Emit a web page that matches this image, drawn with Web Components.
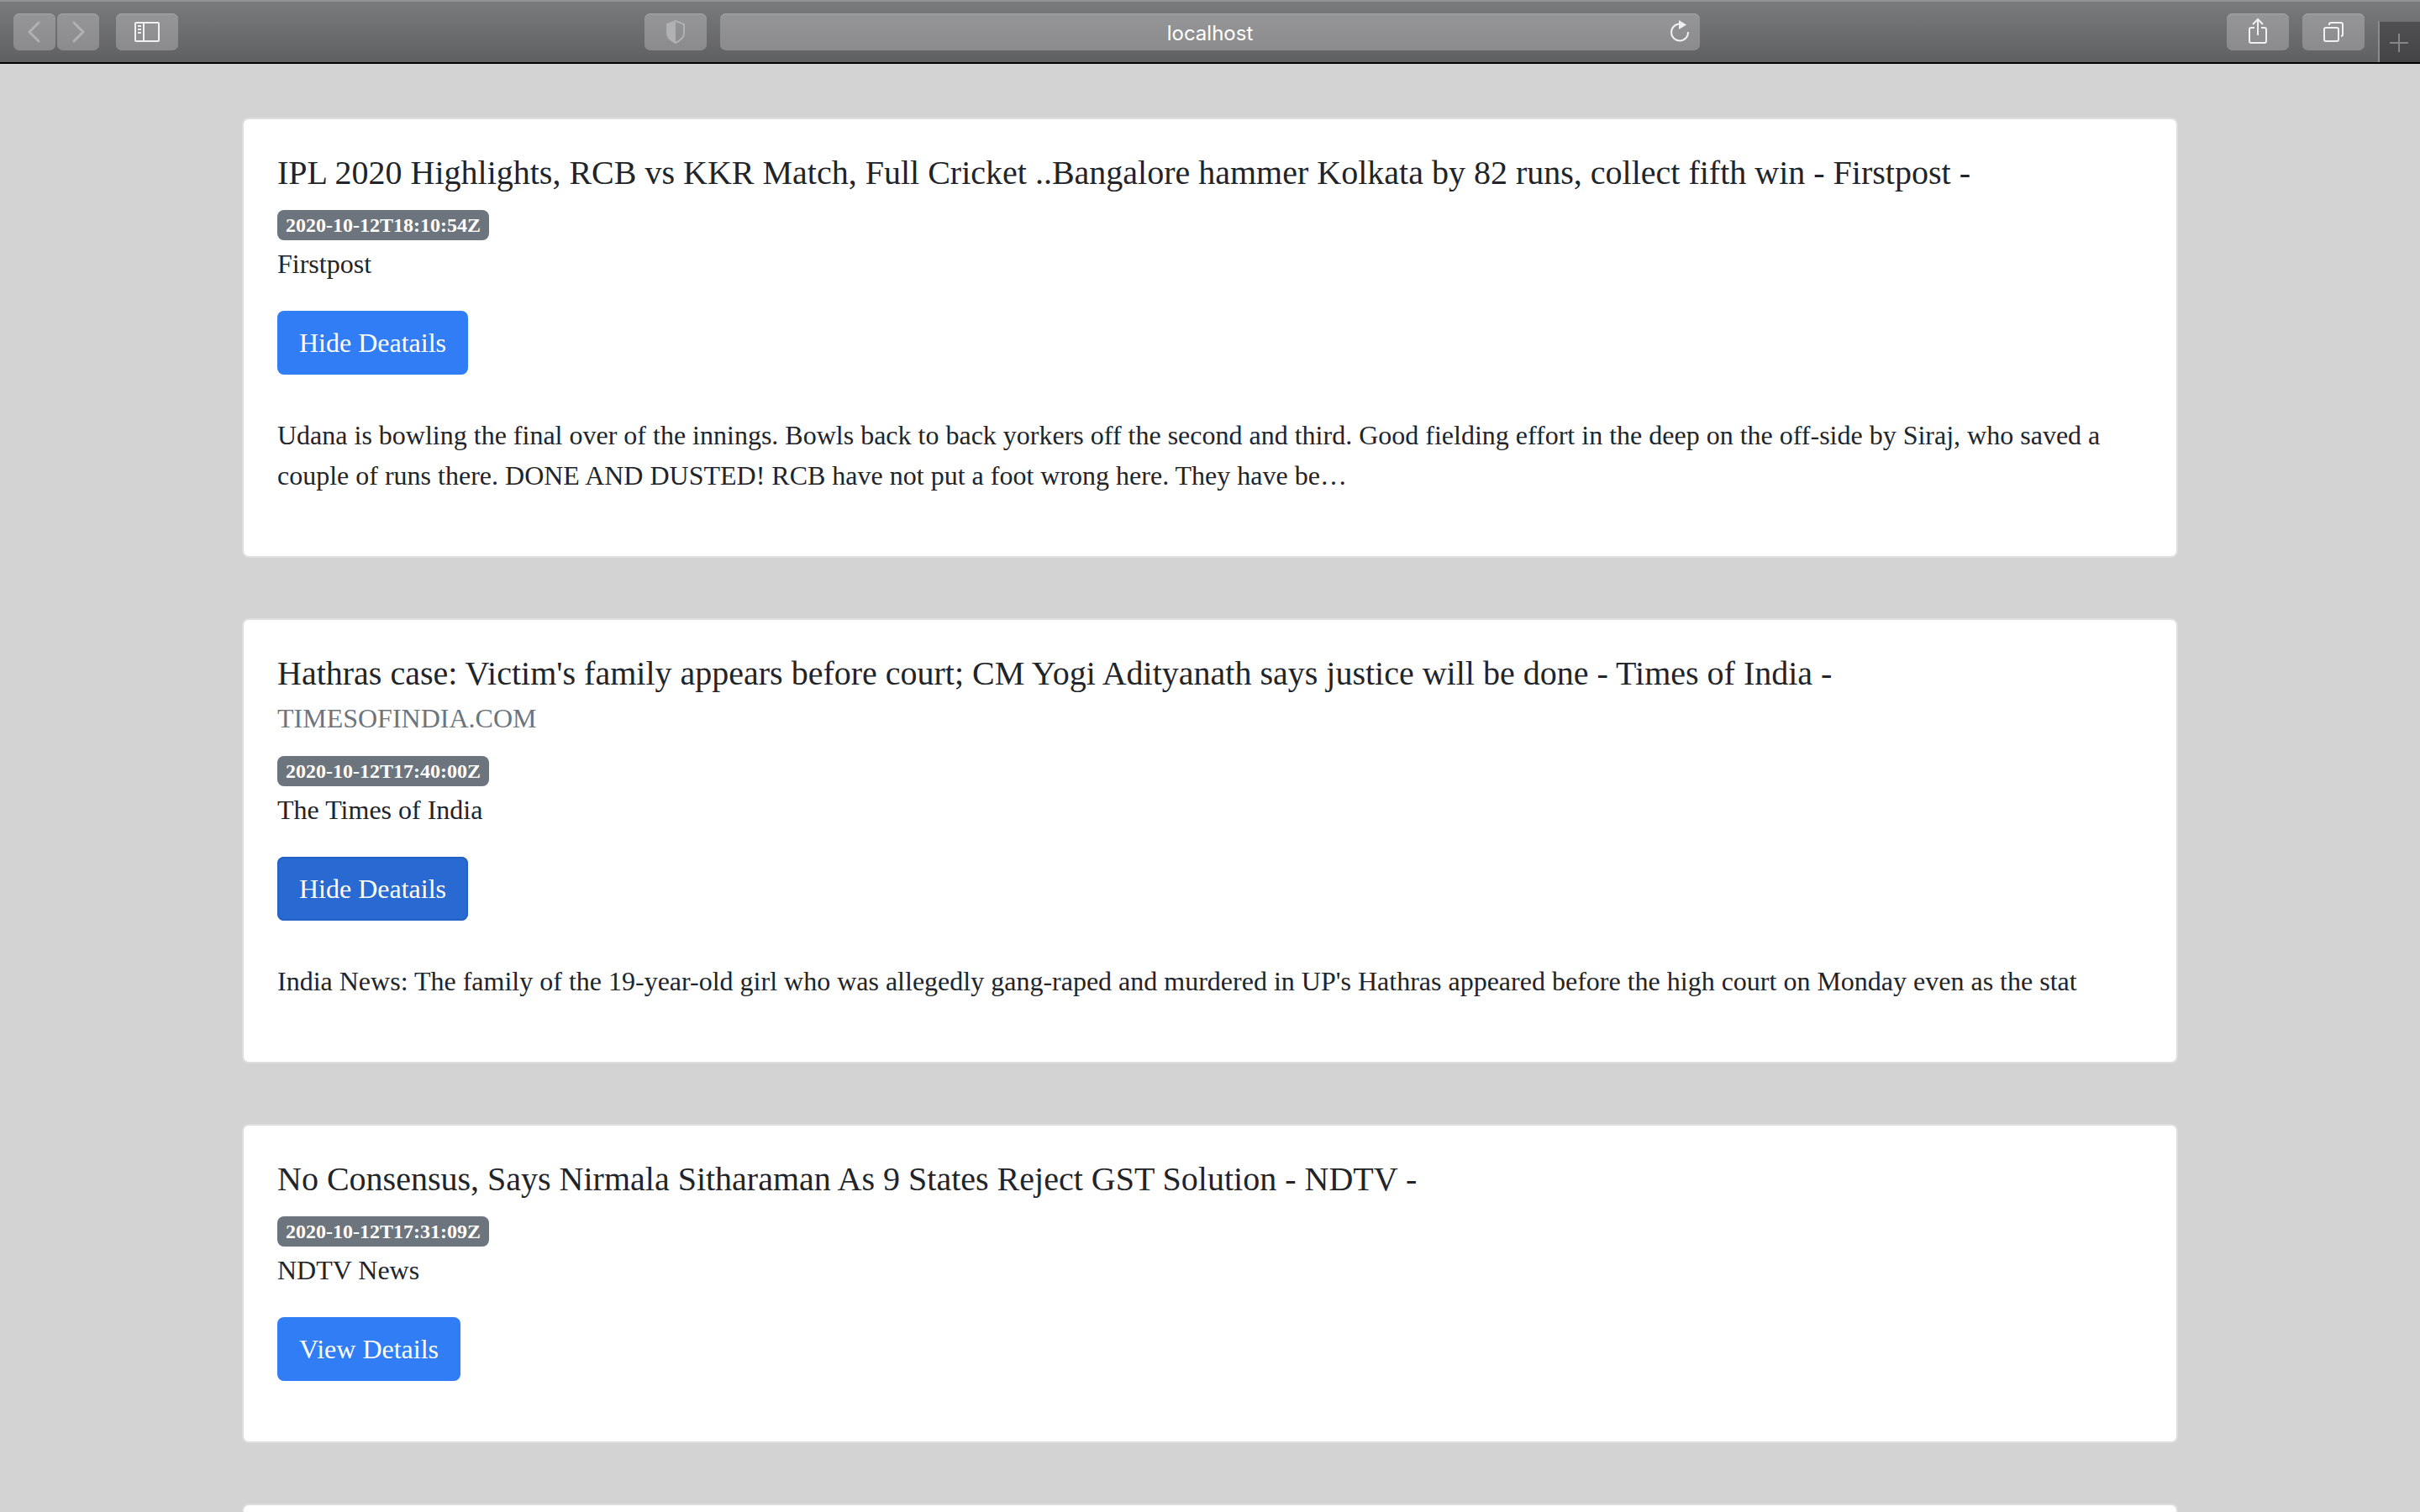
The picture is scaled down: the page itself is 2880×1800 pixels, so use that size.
<!DOCTYPE html>
<html lang="en">
<head>
<meta charset="utf-8">
<title>localhost</title>
<style>
  body { margin: 0; background: #d3d3d3; color: #212529; font: 32px/48px "Liberation Serif", "Times New Roman", serif; height: 100vh; overflow: hidden; }
</style>
</head>
<body>
<news-window>
  <news-card heading="IPL 2020 Highlights, RCB vs KKR Match, Full Cricket ..Bangalore hammer Kolkata by 82 runs, collect fifth win - Firstpost -" time="2020-10-12T18:10:54Z" source="Firstpost" action="Hide Deatails">Udana is bowling the final over of the innings. Bowls back to back yorkers off the second and third. Good fielding effort in the deep on the off-side by Siraj, who saved a couple of runs there. DONE AND DUSTED! RCB have not put a foot wrong here. They have be…</news-card>
  <news-card heading="Hathras case: Victim's family appears before court; CM Yogi Adityanath says justice will be done - Times of India -" author="TIMESOFINDIA.COM" time="2020-10-12T17:40:00Z" source="The Times of India" action="Hide Deatails" pressed>India News: The family of the 19-year-old girl who was allegedly gang-raped and murdered in UP's Hathras appeared before the high court on Monday even as the stat</news-card>
  <news-card heading="No Consensus, Says Nirmala Sitharaman As 9 States Reject GST Solution - NDTV -" time="2020-10-12T17:31:09Z" source="NDTV News" action="View Details"></news-card>
  <news-card></news-card>
</news-window>

<template id="toolbar">
  <style>
    :host { display: block; height: 76px; box-sizing: border-box; border-bottom: 2px solid #000; background: linear-gradient(#7a7b7d, #5f6062); box-shadow: inset 0 2px #919295; }
    nav { display: grid; grid-template-columns: 1fr minmax(400px, 1166px) 1fr; height: 100%; }
    .group { display: flex; align-items: flex-start; padding-top: 16px; }
    .left { padding-left: 16px; gap: 2px; }
    .sidebar { margin-left: 18px; }
    .privacy { margin: 0 16px 0 auto; }
    .right { justify-content: flex-end; gap: 16px; }
    button, .address { box-sizing: border-box; height: 44px; border: 0; border-radius: 7px; padding: 0; background: linear-gradient(#959698, #8b8b8d); box-shadow: inset 0 1px #a5a6a8; color: #f0f0f1; }
    button { display: grid; place-items: center; width: 74px; flex: none; }
    .arrow { width: 50px; }
    .dim { color: #b0b1b3; }
    svg { display: block; fill: none; stroke: currentColor; stroke-width: 2; }
    .address { display: flex; flex: 1; align-items: center; position: relative; }
    input { box-sizing: border-box; width: 100%; height: 100%; border: 0; padding: 2px 0 0; background: none; color: #fff; text-align: center; font: 24px "Inter", sans-serif; outline: 0; }
    .address button { position: absolute; right: 4px; width: 40px; background: none; box-shadow: none; }
    .tab { align-self: flex-start; width: 50px; height: 50px; margin-top: 8px; border-radius: 0; background: linear-gradient(#505052, #444446); border-left: 2px solid #8b8c8e; border-top: 2px solid #707173; box-shadow: none; color: #858688; }
  </style>
  <nav aria-label="Browser">
    <div class="group left">
      <button class="arrow dim" aria-label="Back"><svg width="50" height="44"><path d="M30 11 19 22 30 33" stroke-width="3" stroke-linecap="round" stroke-linejoin="round"/></svg></button>
      <button class="arrow dim" aria-label="Forward"><svg width="50" height="44"><path d="M20 11 31 22 20 33" stroke-width="3" stroke-linecap="round" stroke-linejoin="round"/></svg></button>
      <button class="sidebar" aria-label="Sidebar"><svg width="74" height="44"><rect x="23" y="11" width="28" height="22" rx="1"/><path d="M33 11V33M26 15h4M26 19h4M26 23h4"/></svg></button>
      <button class="privacy dim" aria-label="Privacy report"><svg width="74" height="44"><path d="M37 9 47 13V24Q47 30 37 35 27 30 27 24V13Z"/><path d="M37 9V35Q27 30 27 24V13Z" fill="currentColor" stroke="none"/></svg></button>
    </div>
    <div class="group">
      <div class="address">
        <input aria-label="Address" value="localhost">
        <button aria-label="Reload"><svg width="40" height="44"><path d="M30 22A10 10 0 1 1 20 12.500"/><path d="M19 8 28 13.500 19 19Z" fill="currentColor" stroke="none"/></svg></button>
      </div>
    </div>
    <div class="group right">
      <button aria-label="Share"><svg width="74" height="44"><path d="M33 17H29Q27 17 27 19V33Q27 35 29 35H45Q47 35 47 33V19Q47 17 45 17H41M37 26V8M31 13 37 7 43 13"/></svg></button>
      <button aria-label="Tabs"><svg width="74" height="44"><rect x="26" y="17" width="17" height="16" rx="2"/><path d="M32 14V13Q32 11 34 11H46Q48 11 48 13V25Q48 27 46 27"/></svg></button>
      <button class="tab" aria-label="New tab"><svg width="48" height="48"><path d="M12 25H34M23 14V36"/></svg></button>
    </div>
  </nav>
</template>

<template id="window">
  <style>
    :host { display: block; }
    main { display: flex; flex-direction: column; gap: 72px; width: 80%; margin: 64px auto 0; }
  </style>
  <browser-toolbar></browser-toolbar>
  <main><slot></slot></main>
</template>

<template id="card">
  <style>
    :host { display: block; box-sizing: border-box; min-height: 120px; padding: 40px; border: 2px solid #dedede; border-radius: 8px; background: #fff; }
    h5, h6, p { margin: 0; font-weight: 400; }
    h5 { font-size: 40px; line-height: 48px; margin-bottom: 10px; }
    h6 { font-size: 32px; line-height: 38px; margin-bottom: 16px; color: #6c757d; }
    .meta { display: flex; flex-direction: column; align-items: flex-start; gap: 4px; padding-top: 10px; }
    time { padding: 6px 10px; border-radius: 8px; background: #6c757d; color: #fff; font-size: 24px; line-height: 24px; font-weight: 700; }
    button { height: 76px; margin: 32px 0; padding: 0 26px; border: 0; border-radius: 8px; background: #307df6; color: #fff; font: inherit; }
    :host([pressed]) button { background: #2969d2; box-shadow: inset 0 0 0 2px #2562c5; }
    .detail { padding: 16px 0 32px; }
    [hidden] { display: none; }
  </style>
  <h5></h5>
  <h6></h6>
  <div class="meta"><time></time><span class="source"></span></div>
  <button></button>
  <p class="detail"><slot></slot></p>
</template>

<script>
  const clone = (host, id) => {
    const root = host.attachShadow({ mode: 'open' });
    root.append(document.getElementById(id).content.cloneNode(true));
    return root;
  };

  customElements.define('browser-toolbar', class extends HTMLElement {
    constructor() { super(); clone(this, 'toolbar'); }
  });

  customElements.define('news-window', class extends HTMLElement {
    constructor() { super(); clone(this, 'window'); }
  });

  customElements.define('news-card', class extends HTMLElement {
    connectedCallback() {
      if (this.shadowRoot) return;
      const root = clone(this, 'card');
      const fill = (selector, name) => {
        const node = root.querySelector(selector);
        node.textContent = this.getAttribute(name) || '';
        node.hidden = !this.hasAttribute(name);
      };
      fill('h5', 'heading');
      fill('h6', 'author');
      fill('time', 'time');
      fill('.source', 'source');
      fill('button', 'action');
      root.querySelector('.detail').hidden = !this.textContent.trim();
    }
  });
</script>
</body>
</html>
